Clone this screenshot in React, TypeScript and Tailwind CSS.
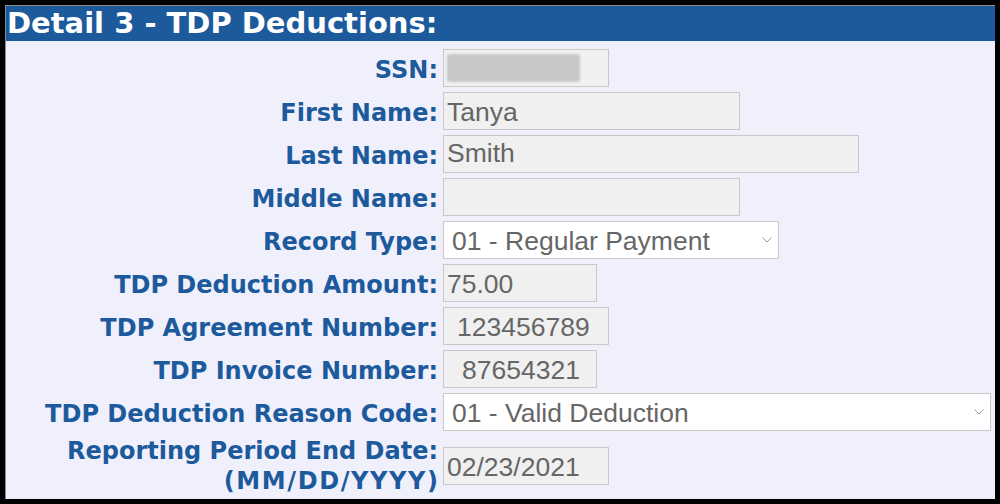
import React from "react";

const label = "text-[24px] font-bold text-[#1c5a9c] leading-[28px] text-right translate-y-[2px]";
const box = "h-[38px] border border-[#c8c8c8] bg-[#f0f0f0] flex items-center text-[26.5px] text-[#666666]";
const valFont = { fontFamily: '"Liberation Sans", Arial, sans-serif' };

function Chevron() {
  return (
    <svg width="10" height="6" viewBox="0 0 10 6" className="absolute right-[6px] top-1/2 -translate-y-1/2">
      <path d="M0.5 0.5 L5 5 L9.5 0.5" fill="none" stroke="#9a9a9a" strokeWidth="1" />
    </svg>
  );
}

export default function App() {
  return (
    <div className="w-[1000px] h-[504px] bg-black pt-[5px] pl-[5px] pr-[5px] pb-[5px]" style={{ fontFamily: '"DejaVu Sans", Verdana, sans-serif' }}>
      <div className="w-[990px] h-[494px] bg-[#f0f0fd] border-l border-t border-[#8a8a8a] flex flex-col">
        <div className="h-[35px] bg-[#1c5a9c] text-white font-bold text-[29px] leading-[35px] pl-[1px]">
          Detail 3 - TDP Deductions:
        </div>
        <div className="grid grid-cols-[432px_1fr] gap-x-[5px] gap-y-[5px] pt-[8px] items-center">
          <div className={label}>SSN:</div>
          <div className={`${box} w-[166px] pl-[3px]`}>
            <div className="w-[133px] h-[28px] bg-[#c8c8c8] blur-[1px] rounded-[3px]" />
          </div>

          <div className={label}>First Name:</div>
          <div className={`${box} w-[297px] pl-[3px] pt-[4px]`} style={valFont}>Tanya</div>

          <div className={label}>Last Name:</div>
          <div className={`${box} w-[416px] pl-[3px]`} style={valFont}>Smith</div>

          <div className={label}>Middle Name:</div>
          <div className={`${box} w-[297px]`} />

          <div className={label}>Record Type:</div>
          <div className={`${box} w-[336px] pl-[8px] pt-[4px] bg-white relative`} style={valFont}>
            01 - Regular Payment
            <Chevron />
          </div>

          <div className={label}>TDP Deduction Amount:</div>
          <div className={`${box} w-[154px] pl-[3px] pt-[4px]`} style={valFont}>75.00</div>

          <div className={label}>TDP Agreement Number:</div>
          <div className={`${box} w-[166px] pl-[13px] pt-[4px]`} style={valFont}>123456789</div>

          <div className={label}>TDP Invoice Number:</div>
          <div className={`${box} w-[154px] pl-[18px] pt-[4px]`} style={valFont}>87654321</div>

          <div className={label}>TDP Deduction Reason Code:</div>
          <div className={`${box} w-[548px] pl-[8px] pt-[4px] bg-white relative`} style={valFont}>
            01 - Valid Deduction
            <Chevron />
          </div>

          <div className="text-[24px] font-bold text-[#1c5a9c] leading-[30px] text-right">
            Reporting Period End Date:
            <br />
            <span className="tracking-[1.6px] mr-[-1.6px]">(MM/DD/YYYY)</span>
          </div>
          <div className={`${box} w-[166px] pl-[3px] pt-[4px]`} style={valFont}>02/23/2021</div>
        </div>
      </div>
    </div>
  );
}
